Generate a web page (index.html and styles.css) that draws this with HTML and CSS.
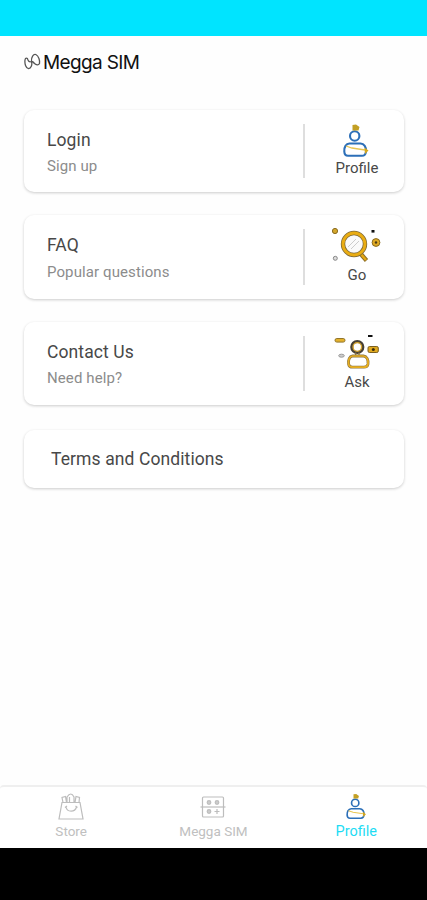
FILE: index.html
```html
<!DOCTYPE html>
<html lang="en">
<head>
<meta charset="utf-8">
<title>Megga SIM</title>
<link rel="stylesheet" href="styles.css">
</head>
<body>
<svg class="defs" width="0" height="0">
  <symbol id="person" viewBox="0 0 54 36">
    <g fill="none" stroke="#2c6fb8" stroke-width="2.100">
      <circle cx="24.700" cy="14" r="4.700"/>
      <path d="M19.500 21.500H30.500C34 21.700 36.500 25 36 29.500Q35.500 33.800 32 33.800H18Q14.500 33.800 14.300 29.500C14 25 16 21.700 19.500 21.500Z"/>
    </g>
    <path d="M16 24L22 26 35 28" fill="none" stroke="#e9c552" stroke-width="1.300"/>
    <path d="M22.500 3L26 2.500 29.500 5 28.500 8.500H22.500Z" fill="#c3a024"/>
    <path d="M34.500 25.500L38.500 28.500 35 32Z" fill="#d5a71b"/>
  </symbol>
</svg>
<div class="status"></div>
<main>
  <header class="brand">
    <svg width="17" height="18" viewBox="0 0 17 18" fill="none" stroke="#555" stroke-width="1.300">
      <path d="M7.500 8.500C8.500 12 7 15 4.500 15.700C2 15.500 .500 11 1 7C1.300 4.500 3.500 4.500 4 7Q5 9.500 7.500 8.500Z"/>
      <path d="M7.500 8.500C7 4 9.500 .800 11.800 1.500C14.800 3 16 7.500 15.500 10.500C14.500 12.500 12 12 10.500 10.500Q9 8.500 7.500 8.500"/>
    </svg>
    <span>Megga SIM</span>
  </header>
  <section class="card login">
    <div class="copy"><h2>Login</h2><p>Sign up</p></div>
    <div class="action">
      <svg width="54" height="36"><use href="#person"/></svg>
      <span>Profile</span>
    </div>
  </section>
  <section class="card faq">
    <div class="copy"><h2>FAQ</h2><p>Popular questions</p></div>
    <div class="action">
      <svg width="54" height="40" viewBox="0 0 54 40">
        <path d="M30 28L36.500 35.500" stroke="#8a6d28" stroke-width="4.400"/>
        <path d="M30 28L36 35" stroke="#e5a812" stroke-width="2.400"/>
        <circle cx="24" cy="19" r="11" fill="#fafafa" stroke="#7e6a3a" stroke-width="4.400"/>
        <circle cx="24" cy="19" r="11" fill="none" stroke="#eaad13" stroke-width="2.800"/>
        <path d="M18 22L26 14M21 24L29 16" stroke="#ccc"/>
        <circle cx="5" cy="6" r="2.600" fill="#d4a72b" stroke="#8a6b20"/>
        <circle cx="46" cy="17.500" r="3.900" fill="#e0aa24" stroke="#8a6b20"/>
        <circle cx="46" cy="17.500" r="1.200" fill="#4b3a14"/>
        <circle cx="5.300" cy="33.300" r="2" fill="#ddd" stroke="#888"/>
        <rect x="41.500" y="5" width="3" height="2.600" fill="#111"/>
      </svg>
      <span>Go</span>
    </div>
  </section>
  <section class="card contact">
    <div class="copy"><h2>Contact Us</h2><p>Need help?</p></div>
    <div class="action">
      <svg width="54" height="39" viewBox="0 0 54 39">
        <circle cx="27.300" cy="15" r="5.600" fill="#fff" stroke="#474035" stroke-width="3"/>
        <circle cx="27.300" cy="15" r="4.300" fill="none" stroke="#d5a32b" stroke-width="1.300"/>
        <path d="M25.700 20.500V23.500M29 20.500V23.500" fill="none" stroke="#8a7442" stroke-width="1.300"/>
        <path d="M22.500 24H33.500C37 24.300 38.500 28 38 32Q37.500 35.200 34 35.200H22.500Q19 35.200 18.600 32C18 28 19.500 24.300 22.500 24Z" fill="#fff" stroke="#8a7442" stroke-width="2.800"/>
        <path d="M22.500 24H33.500C37 24.300 38.500 28 38 32Q37.500 35.200 34 35.200H22.500Q19 35.200 18.600 32C18 28 19.500 24.300 22.500 24Z" fill="none" stroke="#e7ae20" stroke-width="1.700"/>
        <rect x="5" y="6.500" width="10" height="3.600" rx="1.800" fill="#e4b12c" stroke="#91752b"/>
        <rect x="38" y="14.500" width="10.300" height="6" rx="1.500" fill="#e0a91f" stroke="#7b6020"/>
        <circle cx="43.300" cy="17.500" r="1.500" fill="#3b2d0d"/>
        <ellipse cx="11.500" cy="23.700" rx="2.800" ry="1.500" fill="#ccc" stroke="#999"/>
        <rect x="38" y="3" width="4.500" height="2" fill="#111"/>
      </svg>
      <span>Ask</span>
    </div>
  </section>
  <section class="card terms"><h2>Terms and Conditions</h2></section>
</main>
<nav>
  <a>
    <svg width="30" height="28" viewBox="0 0 30 28" fill="none" stroke="#bdbdbd" stroke-width="1.200">
      <path d="M6 9.500H24L27 26H3Z"/>
      <path d="M7 9.500L6 4.500 9.500 3.500 10.500 9.500M11 9.500V4Q15 -2 18 4V9.500M19 9.500L20 3.500 23.500 4.500 23 9.500M13.500 4V9.500"/>
      <path d="M10 14C11 19.500 19 19.500 20.500 14M9 14.500L11 13M19.500 13L21.500 14.500"/>
    </svg>
    <span>Store</span>
  </a>
  <a>
    <svg width="30" height="28" viewBox="0 0 30 28" fill="none" stroke="#bdbdbd" stroke-width="1.200">
      <rect x="4.500" y="4" width="21" height="20" rx="1"/>
      <path d="M2.500 14H27.500"/>
      <g fill="#ccc"><circle cx="11" cy="9.500" r="1.800"/><circle cx="19" cy="9.500" r="1.800"/><circle cx="11" cy="18.500" r="1.800"/></g>
      <path d="M19 16V21M16.500 18.500H21.500"/>
    </svg>
    <span>Megga SIM</span>
  </a>
  <a class="active">
    <svg width="44" height="28" viewBox="-2 1 44 28"><use href="#person" width="42" height="28"/></svg>
    <span>Profile</span>
  </a>
</nav>
<div class="system"></div>
</body>
</html>
```
FILE: styles.css
```css
* { box-sizing: border-box; }
body {
  margin: 0;
  height: 900px;
  display: flex;
  flex-direction: column;
  background: #fefefe;
  font-family: Roboto, sans-serif;
  color: #484848;
  overflow: hidden;
}
.defs { position: absolute; }
svg { display: block; flex: none; }
.status { height: 36px; background: #00e4ff; }
main { flex: 1; padding: 0 23px 0 24px; }
.brand {
  height: 74px;
  padding-top: 15px;
  display: flex;
  align-items: flex-start;
  gap: 2px;
  font: 400 19px/23px "Inter", sans-serif;
  letter-spacing: -0.650px;
  color: #111;
}
.brand svg { margin-top: 2px; }
.card {
  display: flex;
  background: #fff;
  border-radius: 10px;
  box-shadow: 0 1px 3px rgba(0, 0, 0, 0.2);
}
.login { height: 82px; margin-bottom: 23px; }
.faq { height: 84px; margin-bottom: 23px; }
.contact { height: 83px; margin-bottom: 25px; }
.terms { height: 58px; align-items: center; padding-left: 27px; }
h2, p { margin: 0; font-weight: 400; white-space: nowrap; }
h2 { font-size: 17.500px; line-height: 24px; letter-spacing: 0.1px; }
p { font-size: 15px; line-height: 20px; margin-top: 4px; letter-spacing: 0.1px; color: #8c8c8c; }
.copy { flex: 1; padding: 18px 0 0 23px; }
.faq .copy p { margin-top: 5px; }
.action {
  position: relative;
  width: 101px;
  padding: 12px 0 0 7px;
  display: flex;
  flex-direction: column;
  align-items: center;
  font-size: 15px;
  line-height: 20px;
}
.action::before {
  content: "";
  position: absolute;
  left: 0;
  top: 14px;
  bottom: 14px;
  width: 2px;
  background: #dedede;
}
.faq .action, .contact .action { padding-top: 10px; }
.contact .action span { margin-top: 1px; }
nav {
  height: 63px;
  border-top: 2px solid #efefef;
  background: #fff;
  border-radius: 4px 4px 0 0;
  display: grid;
  grid-template-columns: repeat(3, 1fr);
  color: #c0c0c0;
  font-size: 13.500px;
  line-height: 20px;
}
nav a {
  display: flex;
  flex-direction: column;
  align-items: center;
  padding-top: 6px;
}
nav .active { padding-left: 1px; color: #1ddcf4; font-size: 14.500px; line-height: 21px; }
.system { height: 52px; background: #000; }
```
